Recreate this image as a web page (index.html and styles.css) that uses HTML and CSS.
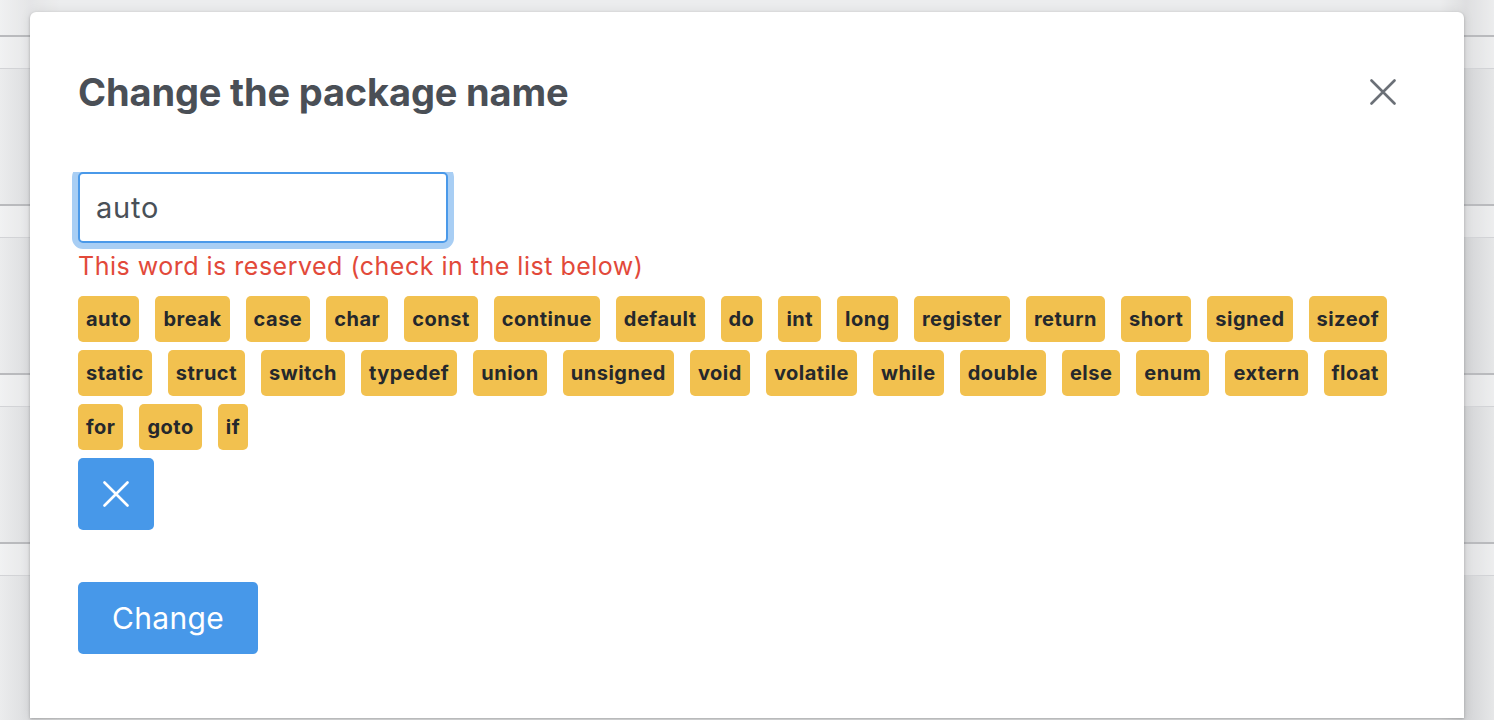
FILE: index.html
```html
<!DOCTYPE html>
<html lang="en">
<head>
<meta charset="utf-8">
<title>Change the package name</title>
<link rel="stylesheet" href="styles.css">
</head>
<body>
<div class="backdrop">
  <div class="bd-top"></div>
  <div class="bd-row"><div class="bd-head"></div><div class="bd-body"></div></div>
  <div class="bd-row"><div class="bd-head"></div><div class="bd-body"></div></div>
  <div class="bd-row"><div class="bd-head"></div><div class="bd-body"></div></div>
  <div class="bd-row"><div class="bd-head"></div><div class="bd-body"></div></div>
</div>
<div class="modal">
  <div class="modal-header">
    <h2 class="modal-title">Change the package name</h2>
    <button class="close" aria-label="Close">
      <svg width="26" height="26" viewBox="0 0 26 26"><path d="M1.5 1.5 L24.5 24.5 M24.5 1.5 L1.5 24.5" stroke="#6b7077" stroke-width="2.6" stroke-linecap="round" fill="none"/></svg>
    </button>
  </div>
  <div class="modal-body">
    <input class="field" type="text" value="auto">
    <div class="error">This word is reserved (check in the list below)</div>
    <div class="tags">
      <span class="tag">auto</span><span class="tag">break</span><span class="tag">case</span><span class="tag">char</span><span class="tag">const</span><span class="tag">continue</span><span class="tag">default</span><span class="tag">do</span><span class="tag">int</span><span class="tag">long</span><span class="tag">register</span><span class="tag">return</span><span class="tag">short</span><span class="tag">signed</span><span class="tag">sizeof</span><span class="tag">static</span><span class="tag">struct</span><span class="tag">switch</span><span class="tag">typedef</span><span class="tag">union</span><span class="tag">unsigned</span><span class="tag">void</span><span class="tag">volatile</span><span class="tag">while</span><span class="tag">double</span><span class="tag">else</span><span class="tag">enum</span><span class="tag">extern</span><span class="tag">float</span><span class="tag">for</span><span class="tag">goto</span><span class="tag">if</span>
    </div>
    <button class="btn btn-icon" aria-label="Clear">
      <svg width="26" height="26" viewBox="0 0 26 26"><path d="M1.5 1.5 L24.5 24.5 M24.5 1.5 L1.5 24.5" stroke="#ffffff" stroke-width="2.6" stroke-linecap="round" fill="none"/></svg>
    </button>
    <button class="btn btn-submit">Change</button>
  </div>
</div>
</body>
</html>
```
FILE: styles.css
```css
* { box-sizing: border-box; }
html, body { margin: 0; padding: 0; height: 100%; overflow: hidden; }
body {
  font-family: Inter, "Noto Sans", "Liberation Sans", sans-serif;
  background: #e4e5e6;
}
.backdrop {
  height: 100%;
  display: flex;
  flex-direction: column;
  background: linear-gradient(90deg, #ebeced 0px, #dcdddf 30px, #e6e7e8 60px, #e6e7e8 1440px, #d3d4d6 1466px, #e6e7e8 1494px);
}
.bd-top { height: 35px; background: rgba(255,255,255,0.25); flex-shrink: 0; }
.bd-row { height: 169px; border-top: 2px solid #b9babd; display: flex; flex-direction: column; flex-shrink: 0; }
.bd-head { height: 32px; background: rgba(255,255,255,0.3); border-bottom: 1px solid #d2d3d6; }
.bd-body { flex: 1; }

.modal {
  position: absolute;
  left: 30px;
  top: 12px;
  width: 1434px;
  height: 706px;
  background: #fff;
  border-radius: 6px 6px 0 0;
  box-shadow: 0 1px 3px rgba(0,0,0,0.25), 0 0 12px rgba(0,0,0,0.08);
  padding: 0 48px;
}
.modal-header {
  display: flex;
  justify-content: space-between;
  align-items: flex-start;
  padding-top: 57px;
  height: 160px;
}
.modal-title {
  margin: 0;
  font-size: 38px;
  line-height: 46px;
  font-weight: 700;
  color: #4a4f56;
  letter-spacing: -0.15px;
}
.close {
  border: 0;
  background: none;
  padding: 0;
  margin: 10px 20px 0 0;
  width: 26px;
  height: 26px;
  cursor: pointer;
}
.close svg { display: block; }
.modal-body { display: flex; flex-direction: column; align-items: flex-start; }
.field {
  width: 370px;
  height: 71px;
  border: 2px solid #4a99e9;
  border-radius: 5px;
  padding: 0 16px;
  font: 400 29px Inter, "Noto Sans", sans-serif;
  letter-spacing: 0.8px;
  color: #495057;
  outline: none;
  box-shadow: 0 0 0 6px #a8cef4;
  clip-path: inset(0 -8px -8px -8px);
}
.error {
  margin-top: 8px;
  font-size: 25px;
  line-height: 30px;
  letter-spacing: 0.5px;
  color: #e2493a;
}
.tags {
  margin-top: 15px;
  display: flex;
  flex-wrap: wrap;
  gap: 8px 16px;
  width: 1340px;
}
.tag {
  height: 46px;
  display: inline-flex;
  align-items: center;
  padding: 0 8px;
  background: #f2c14f;
  border-radius: 5px;
  font-size: 20px;
  letter-spacing: 0.5px;
  font-weight: 700;
  color: #25282c;
}
.btn {
  border: 0;
  border-radius: 5px;
  background: #4798e9;
  color: #fff;
  cursor: pointer;
  display: flex;
  align-items: center;
  justify-content: center;
}
.btn-icon { margin-top: 8px; width: 76px; height: 72px; }
.btn-icon svg { display: block; }
.btn-submit {
  margin-top: 52px;
  width: 180px;
  height: 72px;
  font: 400 30px Inter, "Noto Sans", sans-serif;
  letter-spacing: 0.3px;
}
```
